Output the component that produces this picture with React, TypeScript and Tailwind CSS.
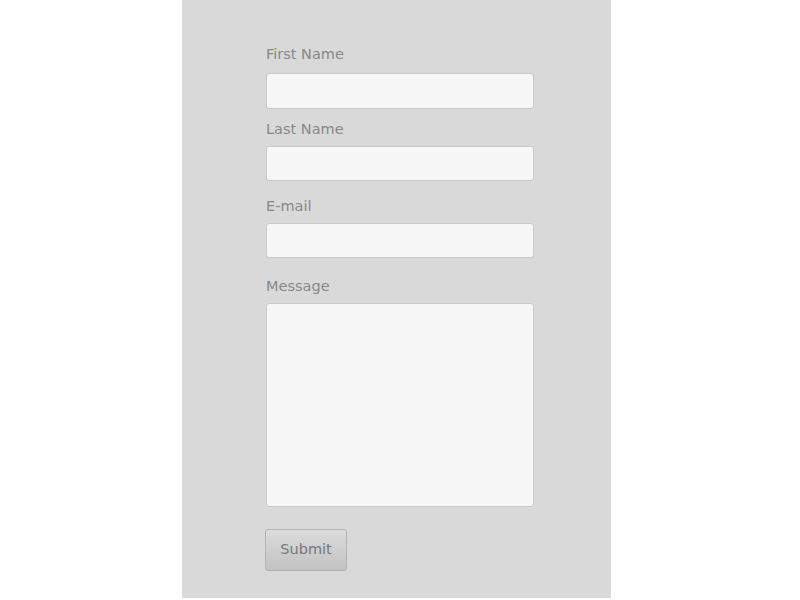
export default function App() {
  return (
    <div className="min-h-screen bg-white">
      <div className="ml-[182px] h-[598px] w-[429px] bg-[#d9d9d9] pl-[84px] pt-[44px] font-['DejaVu_Sans',sans-serif]">
        <form className="flex w-[268px] flex-col">
          <label className="h-5 text-[14.5px] leading-5 text-[#888]">First Name</label>
          <input className="mt-[9px] h-9 rounded-[3px] border border-[#c9c9c9] bg-[#f7f7f7]" />

          <label className="mt-[10px] h-5 text-[14.5px] leading-5 text-[#888]">Last Name</label>
          <input className="mt-[7px] h-[35px] rounded-[3px] border border-[#c9c9c9] bg-[#f7f7f7]" />

          <label className="mt-[15px] h-5 text-[14.5px] leading-5 text-[#888]">E-mail</label>
          <input className="mt-[7px] h-[35px] rounded-[3px] border border-[#c9c9c9] bg-[#f7f7f7]" />

          <label className="mt-[18px] h-5 text-[14.5px] leading-5 text-[#888]">Message</label>
          <textarea className="mt-[7px] h-[204px] resize-none rounded-[3px] border border-[#c9c9c9] bg-[#f7f7f7]" />

          <button
            type="button"
            className="-ml-px mt-[22px] h-[42px] w-[82px] rounded-[3px] border border-[#b3b3b3] bg-gradient-to-b from-[#dcdcdc] to-[#c2c2c2] text-[14.5px] text-[#777]"
          >
            Submit
          </button>
        </form>
      </div>
    </div>
  );
}
